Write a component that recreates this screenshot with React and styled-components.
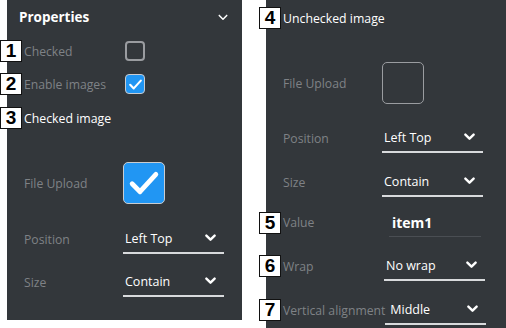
import React from "react";
import styled, { createGlobalStyle } from "styled-components";

const GlobalStyle = createGlobalStyle`
  body {
    margin: 0;
    background: #ffffff;
    font-family: "Open Sans", "Noto Sans", sans-serif;
  }
`;

//Layout
const Page = styled.div`
  display: flex;
  align-items: flex-start;
  width: 506px;
  height: 328px;
  overflow: hidden;
`;

const Panel = styled.div`
  position: relative;
  background: #33373b;
  width: ${(p) => p.$w}px;
  height: ${(p) => p.$h}px;
  margin-left: ${(p) => p.$ml}px;
  display: flex;
  flex-direction: column;
`;

const Row = styled.div`
  position: relative;
  display: flex;
  align-items: center;
  height: ${(p) => p.$h}px;
  margin-top: ${(p) => p.$mt || 0}px;
  padding-left: 17px;
`;

const Header = styled(Row)`
  justify-content: space-between;
  padding: 0 14px 0 12px;
  color: #ffffff;
  font-weight: 700;
  font-size: 13.5px;
`;

const Label = styled.span`
  width: 100px;
  flex-shrink: 0;
  color: #7f8286;
  font-size: 12.2px;
  white-space: nowrap;
`;

const Title = styled.span`
  color: #ffffff;
  font-size: 12.3px;
`;

const Badge = styled.div`
  position: absolute;
  left: -7px;
  top: 50%;
  transform: translateY(-50%);
  width: 20px;
  height: 20px;
  background: #ffffff;
  border: 1.5px solid #111;
  display: flex;
  align-items: center;
  justify-content: center;
  font-family: "Liberation Sans", Arial, sans-serif;
  font-weight: 700;
  font-size: 19px;
  color: #000;
`;

const Check = styled.div`
  box-sizing: border-box;
  width: ${(p) => p.$size}px;
  height: ${(p) => p.$size}px;
  margin-left: ${(p) => p.$ml || 0}px;
  border-radius: ${(p) => (p.$size > 30 ? 5 : 4)}px;
  border: ${(p) =>
    p.$on ? "1px solid #c9ccd0" : `${p.$size > 30 ? 1.5 : 2}px solid #9a9ca0`};
  background: ${(p) => (p.$on ? "#2196f3" : "transparent")};
  display: flex;
  align-items: center;
  justify-content: center;
`;

const Select = styled.div`
  box-sizing: border-box;
  width: 101px;
  height: 30px;
  margin-left: ${(p) => p.$ml || 0}px;
  display: flex;
  align-items: center;
  justify-content: space-between;
  padding: 0 8px 0 2px;
  border-bottom: 2px solid #d8dadc;
  color: #ffffff;
  font-size: 12.5px;
  font-weight: 500;
`;

const Input = styled.div`
  box-sizing: border-box;
  width: 92px;
  height: 29px;
  margin-left: 6px;
  padding-left: 3px;
  display: flex;
  align-items: center;
  border-bottom: 1px solid #4a4e53;
  color: #ffffff;
  font-size: 14px;
  font-weight: 700;
`;

const Chevron = ({ w = 11, sw = 2.6 }) => (
  <svg width={w} height={w * 0.7} viewBox="0 0 12 8">
    <path
      d="M1.5 1.5 L6 6 L10.5 1.5"
      fill="none"
      stroke="#ffffff"
      strokeWidth={sw}
      strokeLinecap="round"
      strokeLinejoin="round"
    />
  </svg>
);

const Tick = ({ s }) => (
  <svg width={s} height={s} viewBox="0 0 24 24">
    <path
      d="M4.5 12.5 L9.5 17.5 L19.5 6.5"
      fill="none"
      stroke="#ffffff"
      strokeWidth="3"
      strokeLinecap="round"
      strokeLinejoin="round"
    />
  </svg>
);

const App = () => {
  return (
    <>
      <GlobalStyle />
      <Page>
        <Panel $w={235} $h={320} $ml={7}>
          <Header $h={34}>
            <span>Properties</span>
            <Chevron w={10} sw={1.8} />
          </Header>
          <Row $h={34}>
            <Badge>1</Badge>
            <Label>Checked</Label>
            <Check $size={20} $ml={1} />
          </Row>
          <Row $h={32}>
            <Badge>2</Badge>
            <Label>Enable images</Label>
            <Check $size={20} $ml={1} $on>
              <Tick s={17} />
            </Check>
          </Row>
          <Row $h={36}>
            <Badge>3</Badge>
            <Title>Checked image</Title>
          </Row>
          <Row $h={42} $mt={26}>
            <Label>File Upload</Label>
            <Check $size={42} $ml={-1} $on>
              <Tick s={38} />
            </Check>
          </Row>
          <Row $h={30} $mt={20}>
            <Label>Position</Label>
            <Select $ml={-1}>
              Left Top <Chevron />
            </Select>
          </Row>
          <Row $h={30} $mt={13}>
            <Label>Size</Label>
            <Select $ml={-1}>
              Contain <Chevron />
            </Select>
          </Row>
        </Panel>

        <Panel $w={240} $h={328} $ml={24}>
          <Row $h={36}>
            <Badge>4</Badge>
            <Title>Unchecked image</Title>
          </Row>
          <Row $h={42} $mt={26}>
            <Label>File Upload</Label>
            <Check $size={42} $ml={-1} />
          </Row>
          <Row $h={30} $mt={19}>
            <Label>Position</Label>
            <Select $ml={-1}>
              Left Top <Chevron />
            </Select>
          </Row>
          <Row $h={30} $mt={14}>
            <Label>Size</Label>
            <Select $ml={-1}>
              Contain <Chevron />
            </Select>
          </Row>
          <Row $h={29} $mt={11}>
            <Badge>5</Badge>
            <Label>Value</Label>
            <Input>item1</Input>
          </Row>
          <Row $h={30} $mt={14}>
            <Badge>6</Badge>
            <Label>Wrap</Label>
            <Select $ml={1}>
              No wrap <Chevron />
            </Select>
          </Row>
          <Row $h={30} $mt={14}>
            <Badge>7</Badge>
            <Label>Vertical alignment</Label>
            <Select $ml={2}>
              &nbsp;Middle <Chevron />
            </Select>
          </Row>
        </Panel>
      </Page>
    </>
  );
};

export default App;
